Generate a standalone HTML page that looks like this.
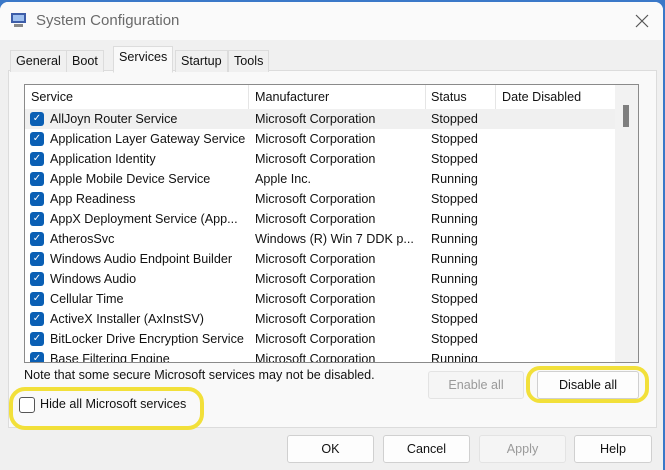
<!DOCTYPE html><html><head><style>
body{margin:0;width:665px;height:470px;overflow:hidden;background:#3a78c8;font-family:"Liberation Sans",sans-serif;font-size:12.6px;color:#111}
.win{position:absolute;left:0;top:2px;width:663px;height:468px;background:#f0f0f0;border-radius:8px 8px 0 0;overflow:hidden}
.title{position:absolute;left:0;top:0;width:663px;height:38px;background:#fafafa}
.title span{position:absolute;left:36px;top:10px;font-size:15px;color:#6a6a6a}
.abs{position:absolute}
.tab{position:absolute;top:48px;height:21px;line-height:21px;padding:0 5px;background:#f0f0f0;border:1px solid #dcdcdc;border-bottom:none}
.panel{position:absolute;left:8px;top:68px;width:647px;height:356px;background:#f9f9f9;border:1px solid #dcdcdc}
.list{position:absolute;left:24px;top:82px;width:613px;height:277px;background:#fff;border:1px solid #8a8a8a;overflow:hidden}
.row{position:absolute;left:0;height:20px;line-height:20px;width:590px;white-space:nowrap}
.row span{position:absolute}
.cb{position:absolute;left:5px;top:3px;width:14px;height:14px;background:#0a5fb4;border-radius:3px;color:#fff;font-size:10px;line-height:14px;text-align:center}
.btn{position:absolute;height:26px;line-height:26px;text-align:center;background:#fdfdfd;border:1px solid #d0d0d0;border-radius:3px}
.hl{position:absolute;border:4px solid #f2e03a;border-radius:14px}
</style></head><body><div class="win">
<div class="title"><svg class="abs" style="left:10px;top:10px" width="18" height="16"><rect x="1" y="1" width="15" height="10" fill="#3d5da8"/><rect x="3" y="3" width="11" height="6" fill="#9fc0ef"/><rect x="4" y="12" width="9" height="3" fill="#888"/></svg><span>System Configuration</span>
<svg class="abs" style="left:635px;top:12px" width="14" height="14"><path d="M1 1L13 13M13 1L1 13" stroke="#555" stroke-width="1.2"/></svg></div>
<div class="panel"></div>
<div class="tab" style="left:10px">General</div>
<div class="tab" style="left:66px">Boot</div>
<div class="tab" style="left:113px;top:44px;height:25px;background:#f9f9f9;border-bottom:1px solid #f9f9f9">Services</div>
<div class="tab" style="left:175px">Startup</div>
<div class="tab" style="left:228px">Tools</div>
<div class="list">
<div class="row" style="top:0;height:24px;line-height:24px;width:613px;border-bottom:1px solid #eee"><span style="left:6px">Service</span><span style="left:230px">Manufacturer</span><span style="left:406px">Status</span><span style="left:477px">Date Disabled</span>
<div class="abs" style="left:223px;top:0;width:1px;height:24px;background:#e5e5e5"></div><div class="abs" style="left:400px;top:0;width:1px;height:24px;background:#e5e5e5"></div><div class="abs" style="left:470px;top:0;width:1px;height:24px;background:#e5e5e5"></div></div>
<div class="abs" style="left:590px;top:0;width:23px;height:278px;background:#f2f2f2"></div>
<div class="abs" style="left:598px;top:20px;width:6px;height:22px;background:#7f7f7f"></div>
<div class="row" style="top:24px;background:#f0f0f0"><div class="cb">✓</div><span style="left:25px">AllJoyn Router Service</span><span style="left:230px">Microsoft Corporation</span><span style="left:406px">Stopped</span></div>
<div class="row" style="top:44px"><div class="cb">✓</div><span style="left:25px">Application Layer Gateway Service</span><span style="left:230px">Microsoft Corporation</span><span style="left:406px">Stopped</span></div>
<div class="row" style="top:64px"><div class="cb">✓</div><span style="left:25px">Application Identity</span><span style="left:230px">Microsoft Corporation</span><span style="left:406px">Stopped</span></div>
<div class="row" style="top:84px"><div class="cb">✓</div><span style="left:25px">Apple Mobile Device Service</span><span style="left:230px">Apple Inc.</span><span style="left:406px">Running</span></div>
<div class="row" style="top:104px"><div class="cb">✓</div><span style="left:25px">App Readiness</span><span style="left:230px">Microsoft Corporation</span><span style="left:406px">Stopped</span></div>
<div class="row" style="top:124px"><div class="cb">✓</div><span style="left:25px">AppX Deployment Service (App...</span><span style="left:230px">Microsoft Corporation</span><span style="left:406px">Running</span></div>
<div class="row" style="top:144px"><div class="cb">✓</div><span style="left:25px">AtherosSvc</span><span style="left:230px">Windows (R) Win 7 DDK p...</span><span style="left:406px">Running</span></div>
<div class="row" style="top:164px"><div class="cb">✓</div><span style="left:25px">Windows Audio Endpoint Builder</span><span style="left:230px">Microsoft Corporation</span><span style="left:406px">Running</span></div>
<div class="row" style="top:184px"><div class="cb">✓</div><span style="left:25px">Windows Audio</span><span style="left:230px">Microsoft Corporation</span><span style="left:406px">Running</span></div>
<div class="row" style="top:204px"><div class="cb">✓</div><span style="left:25px">Cellular Time</span><span style="left:230px">Microsoft Corporation</span><span style="left:406px">Stopped</span></div>
<div class="row" style="top:224px"><div class="cb">✓</div><span style="left:25px">ActiveX Installer (AxInstSV)</span><span style="left:230px">Microsoft Corporation</span><span style="left:406px">Stopped</span></div>
<div class="row" style="top:244px"><div class="cb">✓</div><span style="left:25px">BitLocker Drive Encryption Service</span><span style="left:230px">Microsoft Corporation</span><span style="left:406px">Stopped</span></div>
<div class="row" style="top:264px"><div class="cb">✓</div><span style="left:25px">Base Filtering Engine</span><span style="left:230px">Microsoft Corporation</span><span style="left:406px">Running</span></div>
</div>
<div class="abs" style="left:24px;top:366px">Note that some secure Microsoft services may not be disabled.</div>
<div class="btn" style="left:428px;top:369px;width:94px;color:#9a9a9a;background:#f5f5f5;border-color:#e3e3e3">Enable all</div>
<div class="btn" style="left:537px;top:369px;width:100px">Disable all</div>
<div class="hl" style="left:526px;top:364px;width:115px;height:29px"></div>
<div class="abs" style="left:19px;top:395px;width:14px;height:14px;border:1px solid #555;border-radius:3px;background:#fff"></div>
<div class="abs" style="left:40px;top:395px">Hide all Microsoft services</div>
<div class="hl" style="left:9px;top:385px;width:187px;height:35px;border-radius:16px"></div>
<div class="btn" style="left:287px;top:433px;width:85px">OK</div>
<div class="btn" style="left:383px;top:433px;width:85px">Cancel</div>
<div class="btn" style="left:479px;top:433px;width:85px;color:#9a9a9a;background:#f5f5f5;border-color:#e3e3e3">Apply</div>
<div class="btn" style="left:574px;top:433px;width:76px">Help</div>
</div></body></html>
